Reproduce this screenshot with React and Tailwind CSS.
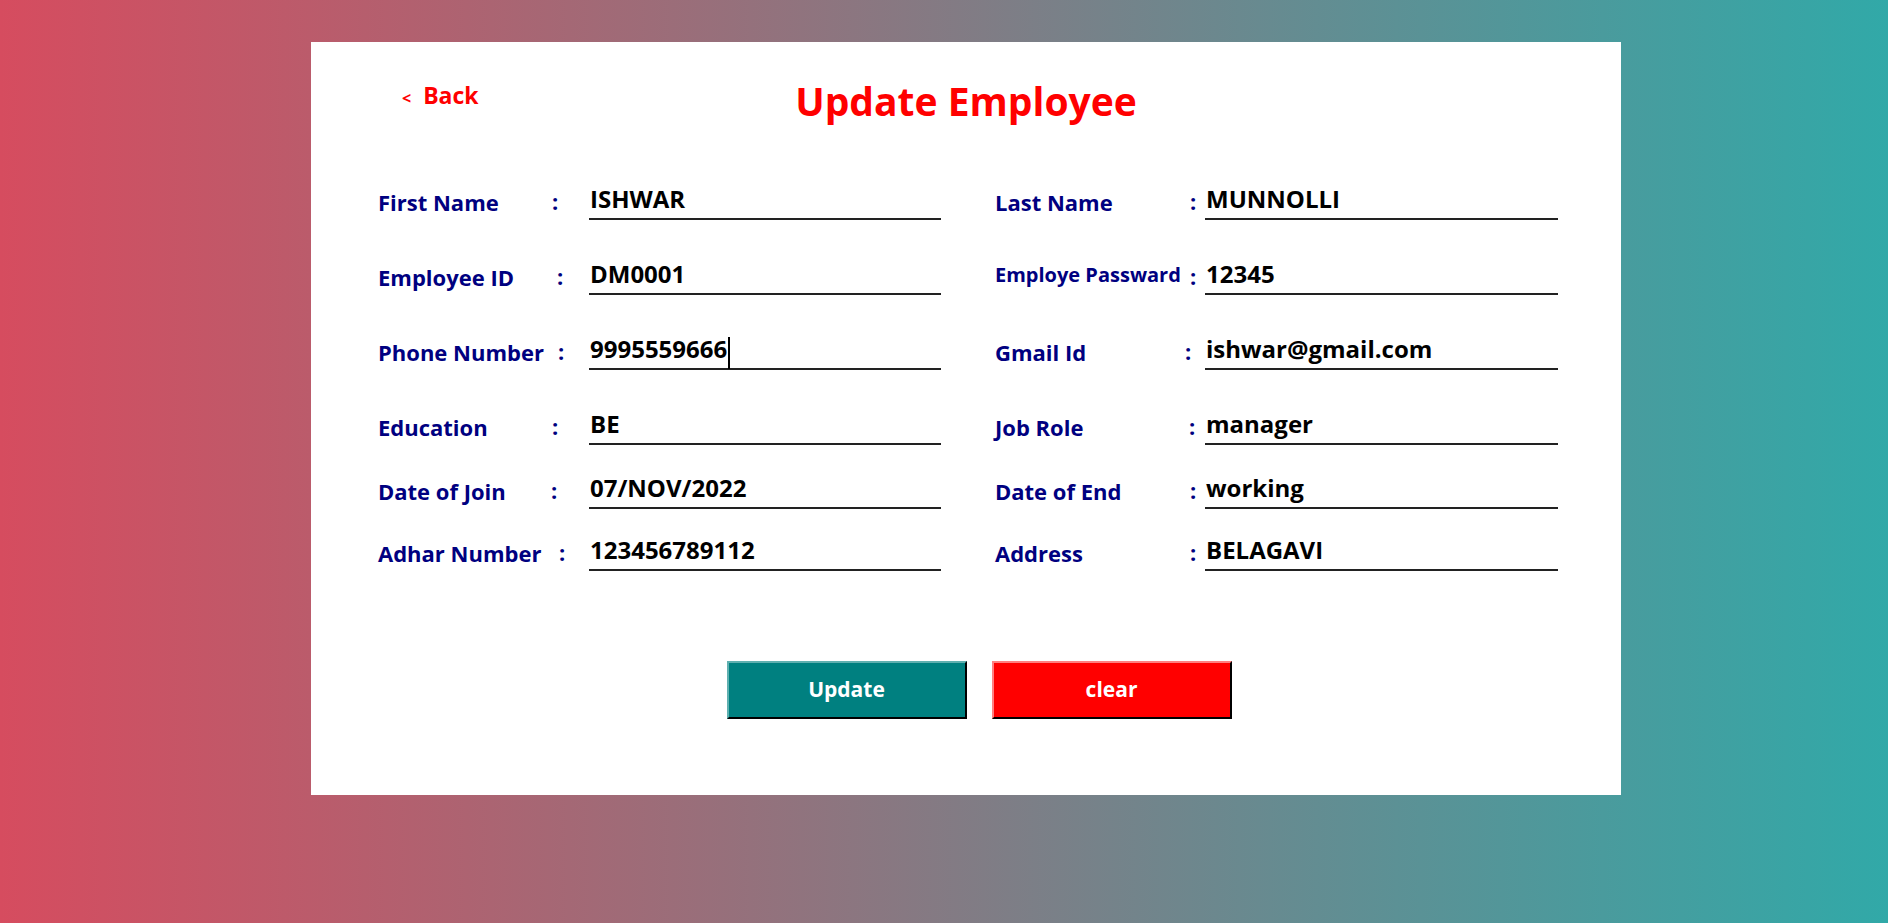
import React from 'react';

const font = { fontFamily: '"Comic Sans MS", "Open Sans", sans-serif' };

const leftFields = [
  { label: 'First Name', value: 'ISHWAR', cx: -2 },
  { label: 'Employee ID', value: 'DM0001', cx: 3 },
  { label: 'Phone Number', value: '9995559666', cx: 4, caret: true },
  { label: 'Education', value: 'BE', cx: -2 },
  { label: 'Date of Join', value: '07/NOV/2022', cx: -3 },
  { label: 'Adhar Number', value: '123456789112', cx: 5 },
];

const rightFields = [
  { label: 'Last Name', value: 'MUNNOLLI', cx: 1 },
  { label: 'Employe Passward', value: '12345', cx: 1, small: true },
  { label: 'Gmail Id', value: 'ishwar@gmail.com', cx: -4 },
  { label: 'Job Role', value: 'manager', cx: 0 },
  { label: 'Date of End', value: 'working', cx: 1 },
  { label: 'Address', value: 'BELAGAVI', cx: 1 },
];

const rowHeights = ['h-[62px]', 'h-[75px]', 'h-[75px]', 'h-[75px]', 'h-[64px]', 'h-[62px]'];

function Field({ field, labelW, colonW, height }) {
  return (
    <div className={`flex items-end ${height}`}>
      <div
        className={`shrink-0 font-bold leading-none text-[#000080] whitespace-nowrap ${
          field.small ? 'text-[20px] pb-[10px]' : 'text-[22px] pb-[7px]'
        } ${labelW}`}
      >
        {field.label}
      </div>
      <div className={`shrink-0 pb-[8px] text-[22px] font-bold leading-none text-[#000080] ${colonW}`}>
        <span style={{ marginLeft: field.cx }}>:</span>
      </div>
      <div className="flex flex-1 items-end border-b-2 border-[#222] pb-[7px] pl-[1px] text-[24px] font-bold leading-none text-black">
        <span>{field.value}</span>
        {field.caret && <span className="mb-[-8px] ml-[1px] inline-block h-[32px] w-[2px] bg-black" />}
      </div>
    </div>
  );
}

export default function App() {
  return (
    <div className="h-[923px] w-full overflow-hidden bg-linear-to-r/srgb from-[#d64c5f] to-[#31a9a8] pt-[42px]" style={font}>
      <div className="ml-[311px] flex h-[753px] w-[1310px] flex-col bg-white">
        <div className="grid h-[116px] grid-cols-[1fr_auto_1fr] items-center">
          <div className="pb-[10px] pl-[91px] text-[23px] font-bold text-[#ff0000]">
            <span className="mr-[12px] text-[16px]">&lt;</span>Back
          </div>
          <h1 className="text-[39px] font-bold leading-none text-[#ff0000]">Update Employee</h1>
          <div />
        </div>

        <div className="ml-[67px] grid w-[1180px] grid-cols-2 gap-x-[54px]">
          <div className="flex flex-col">
            {leftFields.map((f, i) => (
              <Field key={f.label} field={f} labelW="w-[176px]" colonW="w-[35px]" height={rowHeights[i]} />
            ))}
          </div>
          <div className="flex flex-col">
            {rightFields.map((f, i) => (
              <Field key={f.label} field={f} labelW="w-[194px]" colonW="w-[16px]" height={rowHeights[i]} />
            ))}
          </div>
        </div>

        <div className="mt-[90px] flex justify-center gap-[25px] pl-[26px]">
          <button className="h-[58px] w-[240px] border-2 border-t-[#5fb0b0] border-l-[#5fb0b0] border-r-black border-b-black bg-[#008080] text-[21px] font-bold text-white">
            Update
          </button>
          <button className="h-[58px] w-[240px] border-2 border-t-[#ff8080] border-l-[#ff8080] border-r-black border-b-black bg-[#ff0000] text-[21px] font-bold text-white">
            clear
          </button>
        </div>
      </div>
    </div>
  );
}
